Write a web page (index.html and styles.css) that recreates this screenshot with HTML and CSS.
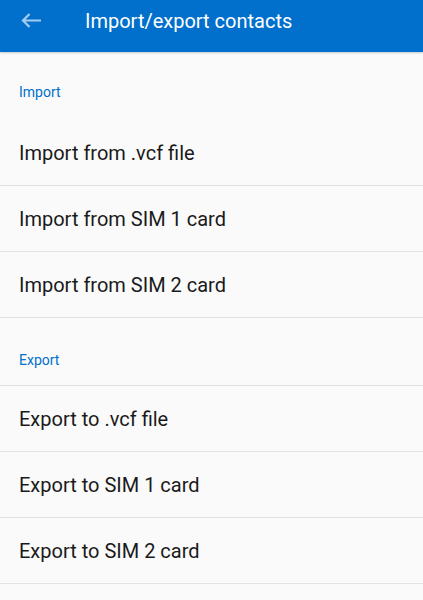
FILE: index.html
```html
<!DOCTYPE html>
<html>
<head>
<meta charset="utf-8">
<link rel="stylesheet" href="styles.css">
</head>
<body>
<header class="appbar">
  <span class="back">
    <svg width="24" height="24" viewBox="0 0 24 24"><path d="M3 11.5H21M9.5 5L3 11.5L9.5 18" fill="none" stroke="#a6cbf0" stroke-width="2.2"/></svg>
  </span>
  <h1 class="title">Import/export contacts</h1>
</header>
<main class="list">
  <div class="section first">Import</div>
  <div class="row">Import from .vcf file</div>
  <div class="row">Import from SIM 1 card</div>
  <div class="row">Import from SIM 2 card</div>
  <div class="section">Export</div>
  <div class="row">Export to .vcf file</div>
  <div class="row">Export to SIM 1 card</div>
  <div class="row">Export to SIM 2 card</div>
</main>
</body>
</html>
```
FILE: styles.css
```css
html, body {
  margin: 0;
  padding: 0;
  background: #fafafa;
  font-family: Roboto, "Liberation Sans", sans-serif;
}
.appbar {
  height: 52px;
  box-sizing: border-box;
  padding-top: 9px;
  background: #0070cc;
  display: flex;
  align-items: flex-start;
  box-shadow: 0 1px 2px rgba(0,0,0,0.2);
}
.back {
  width: 24px;
  height: 24px;
  margin-left: 20px;
  display: flex;
}
.title {
  margin: 0 0 0 41px;
  font-size: 20px;
  line-height: 24px;
  font-weight: 400;
  color: #ffffff;
}
.section {
  height: 68px;
  box-sizing: border-box;
  padding: 33px 0 0 19px;
  font-size: 14px;
  line-height: 18px;
  color: #0070cc;
  border-bottom: 1px solid #e3e3e3;
}
.section.first {
  padding-top: 31px;
  border-bottom: none;
}
.row {
  height: 66px;
  box-sizing: border-box;
  padding-left: 19px;
  display: flex;
  align-items: center;
  font-size: 20px;
  color: #1a1a1a;
  border-bottom: 1px solid #e3e3e3;
}
```
